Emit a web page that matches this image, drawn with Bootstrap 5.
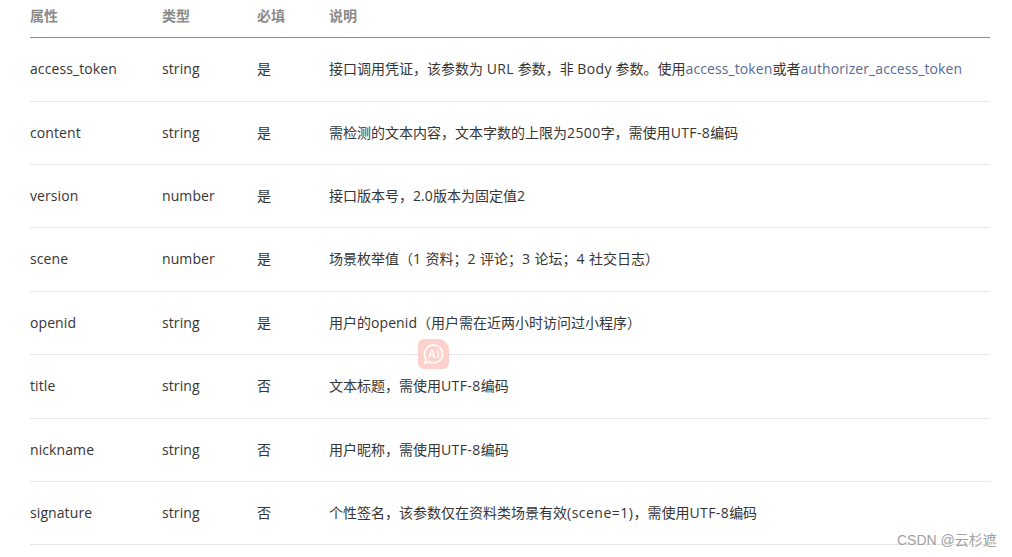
<!DOCTYPE html>
<html lang="zh">
<head>
<meta charset="utf-8">
<title>属性表</title>
<link rel="stylesheet" href="https://cdn.jsdelivr.net/npm/bootstrap@5.3.0/dist/css/bootstrap.min.css">
<style>
html,body{height:100%;}
body{background:#fff;overflow:hidden;font-family:"Open Sans","Noto Sans CJK SC",sans-serif;font-size:14px;color:#353535;}
.page-wrap{padding:0 22px 0 30px;position:relative;height:557px;}
.doc-table{table-layout:fixed;width:960px;margin:0;font-size:14px;color:#353535;--bs-table-color:#353535;}
.doc-table th,.doc-table td{padding:0;vertical-align:middle;background:transparent;}
.doc-table thead th{height:37.75px;padding-bottom:6px;font-size:14px;font-weight:700;color:#8a8a8a;border-bottom:1px solid #8c8c8c;}
.doc-table tbody td{height:63.4px;padding-bottom:1.3px;border-bottom:1px solid #e6e6e6;}
.c1{width:132px}.c2{width:95px}.c3{width:72px}
.lat{letter-spacing:.09px;}
.lat-wide{letter-spacing:.4px;}
.lat-wider{letter-spacing:.5px;}
.gap-words{word-spacing:.75px;}
.lnk{color:#576b95;text-decoration:none;}
.ai-badge{position:absolute;left:418px;top:339px;width:31px;height:30px;background:#ffc9c5;border-radius:6px 11px 6px 6px;opacity:.85;}
.ai-badge svg{display:block;width:100%;height:100%;}
.mark-text{position:absolute;left:897px;top:531px;font-family:"Liberation Sans","Noto Sans CJK SC",sans-serif;font-size:14px;line-height:18px;color:#a0a0a0;white-space:nowrap;}
</style>
</head>
<body>
<div class="page-wrap">
<table class="table doc-table">
<colgroup><col class="c1"><col class="c2"><col class="c3"><col></colgroup>
<thead><tr><th>属性</th><th>类型</th><th>必填</th><th>说明</th></tr></thead>
<tbody>
<tr><td class="lat">access_token</td><td class="lat">string</td><td>是</td><td>接口调用凭证，该参数为 <span class="lat-wide">URL</span> 参数，非 <span class="lat-wide">Body</span> 参数。使用<a class="lnk lat" href="#">access_token</a>或者<a class="lnk lat" href="#">authorizer_access_token</a></td></tr>
<tr><td class="lat">content</td><td class="lat">string</td><td>是</td><td>需检测的文本内容，文本字数的上限为<span class="lat-wide">2500</span>字，需使用<span class="lat-wide">UTF-8</span>编码</td></tr>
<tr><td class="lat">version</td><td class="lat">number</td><td>是</td><td>接口版本号，<span class="lat">2.0</span>版本为固定值<span class="lat">2</span></td></tr>
<tr><td class="lat">scene</td><td class="lat">number</td><td>是</td><td class="gap-words">场景枚举值（<span class="lat">1</span> 资料；<span class="lat">2</span> 评论；<span class="lat">3</span> 论坛；<span class="lat">4</span> 社交日志）</td></tr>
<tr><td class="lat">openid</td><td class="lat">string</td><td>是</td><td>用户的<span class="lat">openid</span>（用户需在近两小时访问过小程序）</td></tr>
<tr><td class="lat">title</td><td class="lat">string</td><td>否</td><td>文本标题，需使用<span class="lat-wide">UTF-8</span>编码</td></tr>
<tr><td class="lat">nickname</td><td class="lat">string</td><td>否</td><td>用户昵称，需使用<span class="lat-wide">UTF-8</span>编码</td></tr>
<tr><td class="lat">signature</td><td class="lat">string</td><td>否</td><td>个性签名，该参数仅在资料类场景有效<span class="lat-wider">(scene=1)</span>，需使用<span class="lat-wide">UTF-8</span>编码</td></tr>
</tbody>
</table>
<div class="ai-badge"><svg viewBox="0 0 31 30" fill="none"><path d="M15.5 6a9 9 0 1 1-4.6 16.7L7 24l1.2-3.8A9 9 0 0 1 15.5 6Z" stroke="#fff" stroke-width="1.6"/><path d="M10.8 19l2.6-7.5h1l2.6 7.5M11.8 16.5h4.4M20 11.5V19" stroke="#fff" stroke-width="1.4"/></svg></div>
<div class="mark-text">CSDN @云杉遮</div>
</div>
<script src="https://cdn.jsdelivr.net/npm/bootstrap@5.3.0/dist/js/bootstrap.bundle.min.js"></script>
</body>
</html>
